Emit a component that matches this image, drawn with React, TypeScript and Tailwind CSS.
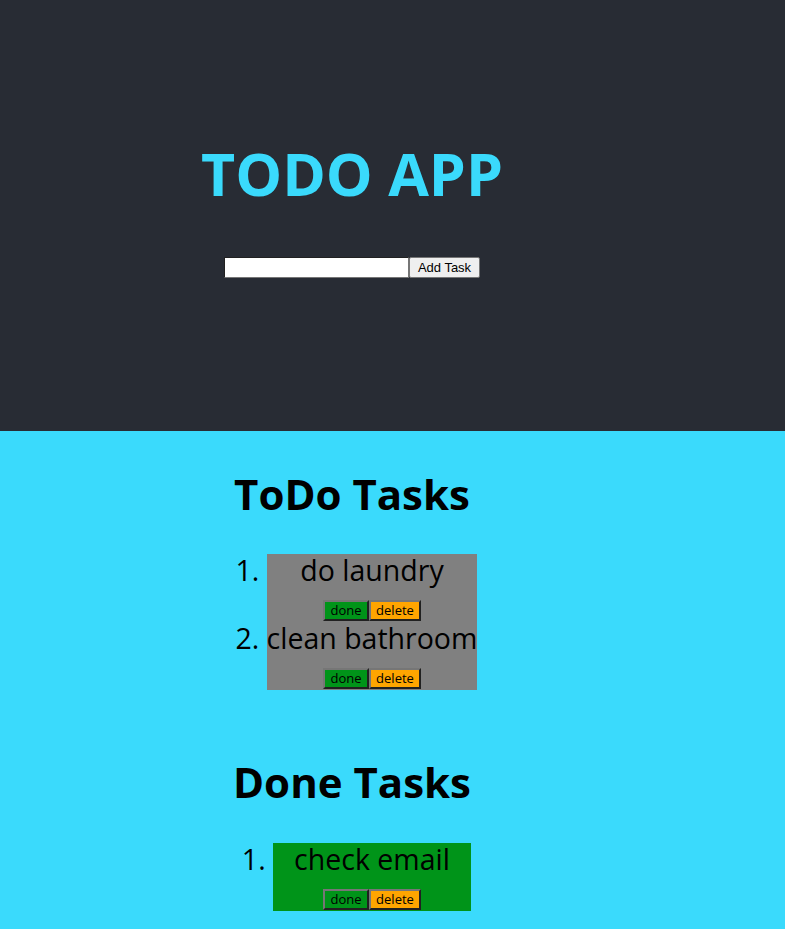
import React from "react";

const font = { fontFamily: '"Open Sans", "Noto Sans", sans-serif' };

function TaskButtons() {
  return (
    <div className="flex justify-center h-[21px]">
      <button className="h-[21px] w-[46px] bg-[#009419] text-black text-[13px] leading-none border-2 [border-style:outset] border-[#767676] p-0">
        done
      </button>
      <button className="h-[21px] w-[52px] bg-[#ffa500] text-black text-[13px] leading-none border-2 [border-style:outset] border-[#767676] p-0">
        delete
      </button>
    </div>
  );
}

function Section({
  title,
  items,
  bg,
  top,
  gap,
}: {
  title: string;
  items: string[];
  bg: string;
  top: string;
  gap: string;
}) {
  return (
    <section className={`inline-block align-top ${top}`}>
      <h2 className="text-[42px] font-bold leading-[60px] whitespace-nowrap text-center">{title}</h2>
      <ol className={`list-decimal text-left pl-[40px] ${gap}`}>
        {items.map((t) => (
          <li key={t} className="text-[28.5px] leading-[32px]">
            <div className={`${bg} text-center pb-px`}>
              <div className="h-[36px] leading-[32px] mb-[10px] whitespace-nowrap">{t}</div>
              <TaskButtons />
            </div>
          </li>
        ))}
      </ol>
    </section>
  );
}

export default function App() {
  return (
    <div style={font} className="min-h-[929px] bg-[#3adafc] text-black">
      <header className="bg-[#282c34] h-[431px]">
        <div className="w-[704px] text-center pt-[137px]">
          <h1 className="text-[59px] font-bold text-[#3adafc] leading-[72px] h-[72px]">TODO APP</h1>
          <div className="mt-[48px] flex justify-center">
            <input
              type="text"
              className="w-[185px] h-[21px] bg-white border border-[#767676] [border-style:inset] px-0.5"
            />
            <button
              style={{ fontFamily: '"Liberation Sans", Arial, sans-serif' }}
              className="w-[71px] h-[21px] bg-[#efefef] border border-[#767676] rounded-[2px] text-[13px] text-black leading-none px-1.5"
            >
              Add Task
            </button>
          </div>
        </div>
      </header>
      <main className="w-[704px] text-center">
        <div>
          <Section
            title="ToDo Tasks"
            items={["do laundry", "clean bathroom"]}
            bg="bg-[#808080]"
            top="mt-[33px]"
            gap="mt-[30px]"
          />
        </div>
        <div>
          <Section
            title="Done Tasks"
            items={["check email"]}
            bg="bg-[#009419]"
            top="mt-[62px]"
            gap="mt-[31px]"
          />
        </div>
      </main>
    </div>
  );
}
